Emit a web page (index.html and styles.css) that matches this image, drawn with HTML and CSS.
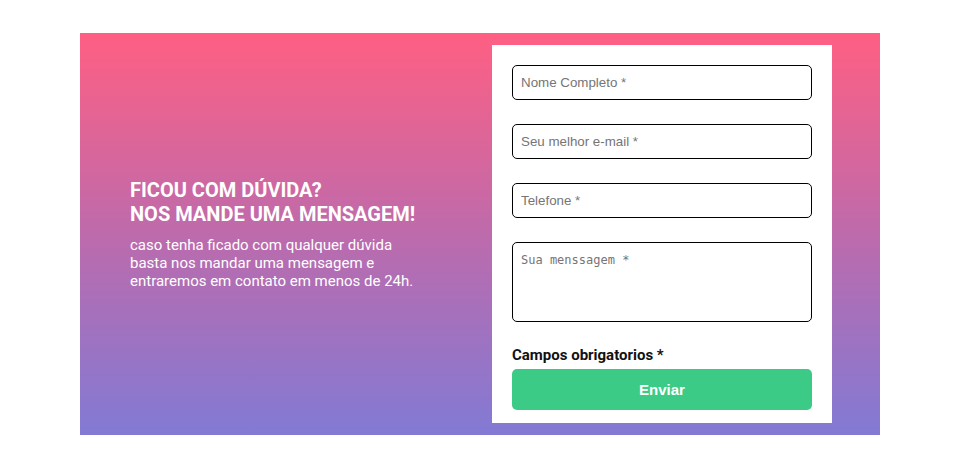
FILE: index.html
```html
<!DOCTYPE html>
<html lang="pt-BR">
<head>
<meta charset="utf-8">
<title>Contato</title>
<link rel="stylesheet" href="styles.css">
</head>
<body>
<div class="page">
  <section class="contact">
    <div class="intro">
      <h2 class="intro-title">Ficou com dúvida?<br>Nos mande uma mensagem!</h2>
      <p class="intro-text">caso tenha ficado com qualquer dúvida basta nos mandar uma mensagem e entraremos em contato em menos de 24h.</p>
    </div>
    <form class="form-panel">
      <input class="field" type="text" placeholder="Nome Completo *">
      <input class="field" type="email" placeholder="Seu melhor e-mail *">
      <input class="field" type="tel" placeholder="Telefone *">
      <textarea class="field field-area" placeholder="Sua menssagem *"></textarea>
      <p class="required">Campos obrigatorios *</p>
      <button class="submit" type="button">Enviar</button>
    </form>
  </section>
</div>
</body>
</html>
```
FILE: styles.css
```css
* { box-sizing: border-box; }
html, body { margin: 0; padding: 0; background: #fff; }
body { font-family: Roboto, "Liberation Sans", sans-serif; }

.page {
  padding: 33px 0 0 80px;
}

.contact {
  width: 800px;
  display: flex;
  align-items: center;
  background: linear-gradient(180deg, #ff5f83 0%, #b76cb0 55%, #827ad4 100%);
}

.intro {
  flex: 1;
  padding-left: 50px;
  color: #fff;
}

.intro-title {
  margin: 0 0 10px;
  font-size: 20px;
  line-height: 24px;
  font-weight: 700;
  text-transform: uppercase;
}

.intro-text {
  margin: 0;
  width: 290px;
  font-size: 15px;
  line-height: 18px;
}

.form-panel {
  width: 340px;
  margin: 12px 48px 12px 0;
  padding: 20px 20px 13px;
  background: #fff;
  display: flex;
  flex-direction: column;
}

.field {
  display: block;
  width: 300px;
  height: 35px;
  margin: 0 0 24px;
  padding: 0 8px;
  border: 1px solid #000;
  border-radius: 5px;
  font-family: "Liberation Sans", Arial, sans-serif;
  font-size: 13.33px;
  color: #333;
  background: #fff;
  outline: none;
}
.field::placeholder { color: #757575; }

.field-area {
  height: 80px;
  margin-bottom: 0;
  padding: 10px 8px;
  resize: none;
  font-family: "DejaVu Sans Mono", monospace;
  font-size: 12px;
}

.required {
  margin: 24px 0 5px;
  font-size: 15px;
  line-height: 18px;
  font-weight: 700;
  color: #111;
}

.submit {
  width: 300px;
  height: 41px;
  border: none;
  border-radius: 5px;
  background: #3ccb86;
  color: #fff;
  font-family: "Liberation Sans", Arial, sans-serif;
  font-size: 15px;
  font-weight: 700;
  cursor: pointer;
}
```
